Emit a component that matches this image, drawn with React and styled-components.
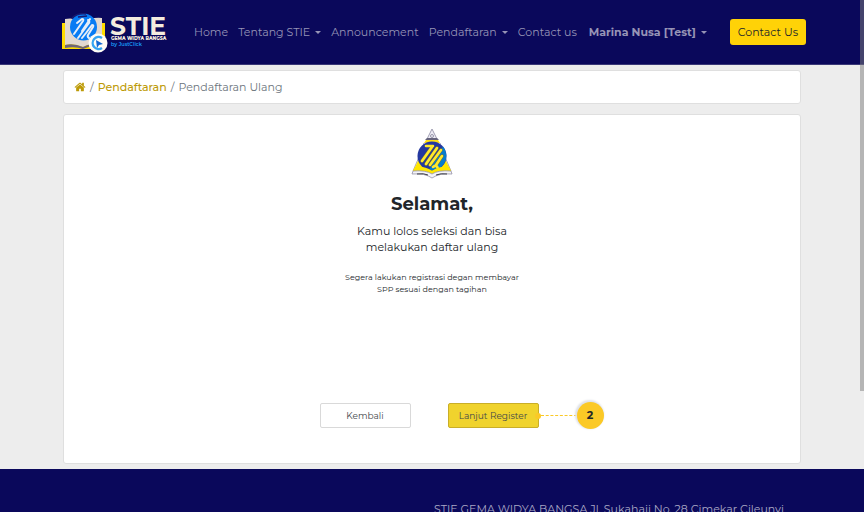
import styled, { createGlobalStyle, ThemeProvider } from "styled-components";

const theme = {
  navy: "#0a085b",
  yellow: "#ffd207",
  gold: "#bd9b08",
  marker: "#fbc926",
  text: "#212529",
  gray: "#6c757d",
  line: "#dfdfdf",
  page: "#ededed",
};

const NAV_LINKS = [
  { label: "Home" },
  { label: "Tentang STIE", menu: true },
  { label: "Announcement" },
  { label: "Pendaftaran", menu: true },
  { label: "Contact us" },
];

const BrandLogo = () => (
  <svg width="110" height="42" viewBox="0 0 110 42" role="img" aria-label="STIE Gema Widya Bangsa">
    <path d="M2 12h43v26H2z" fill="#ffdc00" />
    <path d="M5 8q9-2 18 3q8-5 19-4v26q-10-2-19 3q-9-4-18-2z" fill="#e2d8cf" />
    <path d="M5 34q9-2 18 2q9-5 19-3v3q-11-2-19 2q-8-3-18-1z" fill="#6f6676" />
    <circle cx="23.500" cy="16" r="13.500" fill="#087cf4" />
    <path d="M12 7q5-5 14-4M18 6l9-1" stroke="#171a70" strokeWidth="1.500" fill="none" />
    <g fill="none" stroke="#e6eef8" strokeWidth="2" strokeLinecap="round" strokeLinejoin="round">
      <path d="M14 23l9-13q1-2-1-2l-5 4" />
      <path d="M18 27l11-15q1-2-1-3" />
      <path d="M22 20l8-12M22 27l4-5 6-8q2 0 1 2l-5 8q-1 2 1 3" />
    </g>
    <circle cx="38" cy="32" r="9.500" fill="#fffdf6" />
    <path d="M42 27a6 6 0 1 0 0 10" fill="none" stroke="#36a5f2" strokeWidth="2.400" />
    <path d="M36 29l7 4-4 1-2 3z" fill="#1269d4" />
    <g fontFamily="Montserrat, Inter, sans-serif">
      <text x="50" y="24" fontSize="25" fontWeight="700" fill="#f4ecdf">STIE</text>
      <text x="51" y="29" fontSize="4.600" fontWeight="800" fill="#f4ecdf">GEMA WIDYA BANGSA</text>
      <text x="51" y="35" fontSize="5" fontWeight="600" fill="#189cf6">by JustClick</text>
    </g>
  </svg>
);

const CampusCrest = () => (
  <svg width="42" height="51" viewBox="0 0 42 51" aria-hidden="true">
    <path d="M21 1l5 10h-10z" fill="#eeedf5" stroke="#8a889f" strokeWidth=".8" />
    <circle cx="21" cy="8" r="1.500" fill="none" stroke="#77758c" strokeWidth=".7" />
    <path d="M16 10h10l2 2H14z" fill="#66647c" />
    <path d="M15 12h12l2 3H13z" fill="#ffe014" />
    <path d="M13 15L8 29 2 43M29 15l5 14 6 14" fill="none" stroke="#a5a3b8" />
    <path d="M7 33q8 0 14 4q6-4 14-4l5 10q-12-2-19 2q-7-4-19-2z" fill="#ffe600" />
    <circle cx="21" cy="28" r="14.500" fill="#2438a0" />
    <path d="M32 18.500a14.500 14.500 0 0 1-14 23.500z" fill="#087dcc" />
    <g fill="none" stroke="#75712f" strokeWidth="3.400" strokeLinecap="round">
      <path d="M11 33l10-14M15 36l11-16M19 37l11-15M25 37l6-9" />
    </g>
    <g fill="none" stroke="#ffe92c" strokeWidth="2.600" strokeLinecap="round">
      <path d="M11 33l10-14M15 36l11-16M19 37l11-15M25 37l6-9" />
      <path d="M15 18h7M22 39q4-3 5 2" />
    </g>
    <path d="M4 39q10-1 17 4q7-5 17-4l2 4q-11-1-19 3q-8-4-19-3z" fill="#ffe600" />
    <path d="M2 43q13-1 19 3q6-4 19-3l1 3q-13-1-20 4q-7-5-20-4z" fill="#f4f4f8" stroke="#85829b" strokeWidth=".7" />
    <path d="M6 46q7-1 11 1M25 47q5-2 11-1" fill="none" stroke="#3b3b43" strokeWidth="1" />
  </svg>
);

const HomeIcon = () => (
  <svg width="12" height="12" viewBox="0 0 1792 1792" fill="currentColor" aria-hidden="true">
    <path d="M1472 992v480q0 26-19 45t-45 19h-384v-384h-256v384h-384q-26 0-45-19t-19-45v-480q0-1 .5-3t.5-3l575-474 575 474q1 2 1 6zm223-69l-62 74q-8 9-21 11h-3q-13 0-21-7l-692-577-692 577q-12 8-24 7-13-2-21-11l-62-74q-8-10-7-23.500t11-21.500l719-599q32-26 76-26t76 26l244 204v-195q0-14 9-23t23-9h192q14 0 23 9t9 23v408l219 182q10 8 11 21.500t-7 23.500z" />
  </svg>
);

export default function App() {
  return (
    <ThemeProvider theme={theme}>
      <GlobalStyle />
      <Page>
        <Header>
          <NavBar>
            <Brand href="#home">
              <BrandLogo />
            </Brand>
            <Nav>
              {NAV_LINKS.map(({ label, menu }) => (
                <NavLink key={label} href="#menu">
                  {label}
                  {menu && <Caret />}
                </NavLink>
              ))}
            </Nav>
            <UserButton type="button">
              Marina Nusa [Test]
              <Caret />
            </UserButton>
            <ContactButton type="button">Contact Us</ContactButton>
          </NavBar>
        </Header>
        <Content>
          <Breadcrumb aria-label="Breadcrumb">
            <CrumbLink href="#home" aria-label="Beranda">
              <HomeIcon />
            </CrumbLink>
            <span>/</span>
            <CrumbLink href="#pendaftaran">Pendaftaran</CrumbLink>
            <span>/</span>
            <span>Pendaftaran Ulang</span>
          </Breadcrumb>
          <Card>
            <CampusCrest />
            <Title>Selamat,</Title>
            <Message>
              Kamu lolos seleksi dan bisa
              <br />
              melakukan daftar ulang
            </Message>
            <Note>
              Segera lakukan registrasi degan membayar
              <br />
              SPP sesuai dengan tagihan
            </Note>
            <Actions>
              <ActionButton type="button">Kembali</ActionButton>
              <MarkedAction>
                <ActionButton type="button" $primary>
                  Lanjut Register
                </ActionButton>
                <Callout>
                  <Connector />
                  <StepNumber>2</StepNumber>
                </Callout>
              </MarkedAction>
            </Actions>
          </Card>
        </Content>
        <Footer>
          <Address>STIE GEMA WIDYA BANGSA Jl. Sukahaji No. 28 Cimekar Cileunyi</Address>
        </Footer>
        <ScrollThumb />
      </Page>
    </ThemeProvider>
  );
}

const GlobalStyle = createGlobalStyle`
  * {
    box-sizing: border-box;
  }
  body {
    margin: 0;
    font-family: Montserrat, Inter, sans-serif;
    font-size: 11px;
    line-height: 16px;
    color: ${theme.text};
    background: ${theme.page};
  }
  button {
    font: inherit;
    cursor: pointer;
  }
  a {
    text-decoration: none;
  }
`;

const Page = styled.div`
  position: relative;
  height: 100vh;
  overflow: hidden;
`;

const Header = styled.header`
  padding: 11px 58px 11px 60px;
  background: ${({ theme }) => theme.navy};
  border-bottom: 1px solid #3a3878;
`;
const NavBar = styled.div`
  max-width: 746px;
  margin: 0 auto;
  display: flex;
  align-items: center;
`;
const Brand = styled.a`
  display: flex;
  flex: none;
  margin-right: 24px;
`;
const Nav = styled.nav`
  display: flex;
  gap: 10px;
`;
const NavLink = styled.a`
  display: flex;
  align-items: center;
  white-space: nowrap;
  color: #9694b6;
`;
const Caret = styled.span`
  margin-left: 5px;
  border: 3px solid transparent;
  border-top-color: currentColor;
  border-bottom: 0;
`;
const UserButton = styled.button`
  display: flex;
  align-items: center;
  margin-left: 12px;
  padding: 0;
  border: 0;
  background: none;
  white-space: nowrap;
  && {
    font-weight: 700;
  }
  color: #9694b6;
`;
const ContactButton = styled.button`
  height: 26px;
  margin-left: auto;
  padding: 0 8px;
  border: 0;
  border-radius: 3px;
  white-space: nowrap;
  color: ${({ theme }) => theme.text};
  background: ${({ theme }) => theme.yellow};
`;

const Content = styled.main`
  max-width: 738px;
  margin: 0 auto;
  padding: 5px 0;
  display: flex;
  flex-direction: column;
  gap: 10px;
`;
const Breadcrumb = styled.nav`
  display: flex;
  align-items: center;
  gap: 4px;
  padding: 8px 10px;
  border: 1px solid ${({ theme }) => theme.line};
  border-radius: 3px;
  color: ${({ theme }) => theme.gray};
  background: #fff;
`;
const CrumbLink = styled.a`
  display: flex;
  font-weight: 500;
  color: ${({ theme }) => theme.gold};
`;

const Card = styled.section`
  display: flex;
  flex-direction: column;
  align-items: center;
  padding: 13px 16px 35px;
  border: 1px solid ${({ theme }) => theme.line};
  border-radius: 3px;
  text-align: center;
  background: #fff;
`;
const Title = styled.h1`
  margin: 12px 0 6px;
  font-size: 18px;
  font-weight: 700;
  line-height: 26px;
`;
const Message = styled.p`
  margin: 0 0 16px;
`;
const Note = styled.p`
  margin: 0;
  font-size: 8px;
  line-height: 12px;
`;
const Actions = styled.div`
  display: flex;
  gap: 37px;
  margin-top: 108px;
  padding-right: 6px;
`;
const MarkedAction = styled.div`
  position: relative;
`;
const ActionButton = styled.button`
  width: 91px;
  height: 25px;
  padding: 0;
  border: 1px solid ${({ $primary }) => ($primary ? "#c9ae28" : "#d9d9d9")};
  border-radius: 2px;
  color: #43474a;
  background: ${({ $primary }) => ($primary ? "#f0d32d" : "#fff")};
  && {
    font-size: 9px;
  }
`;
const Callout = styled.div`
  position: absolute;
  top: -1px;
  left: 87px;
  display: flex;
  align-items: center;
`;
const Connector = styled.span`
  display: flex;
  align-items: center;
  width: 42px;
  &::before {
    content: "";
    width: 6px;
    height: 6px;
    border-radius: 50%;
    background: ${({ theme }) => theme.marker};
  }
  &::after {
    content: "";
    flex: 1;
    border-top: 1px dashed ${({ theme }) => theme.marker};
  }
`;
const StepNumber = styled.span`
  width: 27px;
  height: 27px;
  border-radius: 50%;
  font-weight: 700;
  line-height: 27px;
  background: ${({ theme }) => theme.marker};
  box-shadow: -1px -1px 2px 1px #dfe2e8;
`;

const Footer = styled.footer`
  padding: 32px 80px;
  color: #aaa9c5;
  background: ${({ theme }) => theme.navy};
`;
const Address = styled.p`
  margin: 0;
  text-align: right;
`;

const ScrollThumb = styled.div`
  position: absolute;
  top: 0;
  right: 0;
  width: 4px;
  height: 391px;
  background: #7e7e7e80;
`;
